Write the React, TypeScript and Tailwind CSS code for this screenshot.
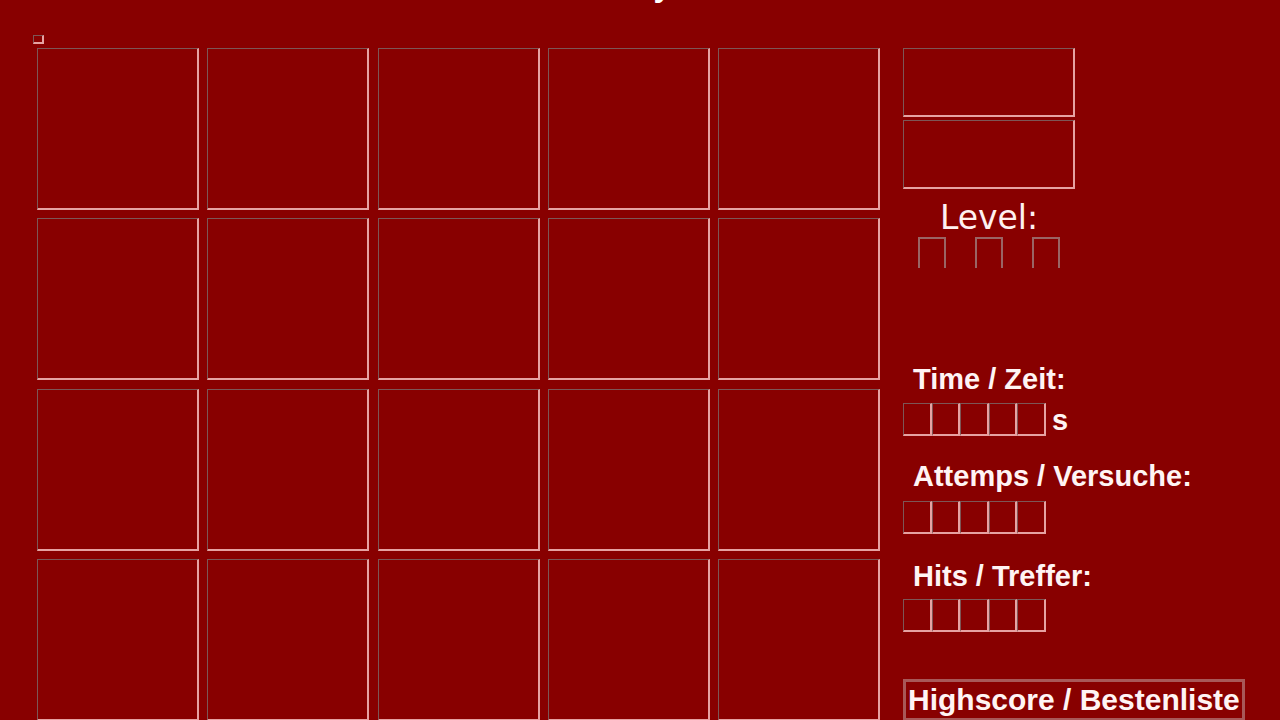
import React from "react";

const cell =
  "border-t border-l border-b-2 border-r-2 border-t-[#7d5656] border-l-[#7d5656] border-b-[#e6a2a2] border-r-[#e6a2a2]";

const label =
  "pl-[10px] text-[29px] leading-[32px] font-bold text-[#fff4f4] whitespace-nowrap";

function Counter({ unit }: { unit?: string }) {
  return (
    <div className="flex items-center">
      {[0, 1, 2, 3, 4].map((i) => (
        <div key={i} className={`w-[28.6px] h-[33px] ${cell}`} />
      ))}
      {unit && <span className="ml-[6px] text-[29px] leading-[32px] font-bold text-[#fff4f4]">{unit}</span>}
    </div>
  );
}

export default function App() {
  return (
    <div
      className="w-[1280px] h-[720px] overflow-hidden bg-[#880000]"
      style={{ fontFamily: '"Liberation Sans", Arial, sans-serif' }}
    >
      {/* title sits mostly above the visible area */}
      <h1 className="-mt-[33px] h-[36px] pr-[60px] text-center text-[32px] leading-[36px] font-bold text-white">
        Memory
      </h1>

      <div className="flex items-start pl-[33px] pt-[32px]">
        {/* playing field */}
        <div className="flex flex-col">
          <div className={`w-[11px] h-[9px] ${cell}`} />
          <div className="ml-[4px] mt-[4px] grid w-[843px] grid-cols-5 gap-[8.25px]">
            {Array.from({ length: 20 }).map((_, i) => (
              <div key={i} className={`h-[162px] ${cell}`} />
            ))}
          </div>
        </div>

        {/* side panel */}
        <div className="ml-[23px] mt-[13px] flex flex-col">
          <div className="flex w-[172px] flex-col">
            <div className={`h-[69px] ${cell}`} />
            <div className={`mt-[3px] h-[69px] ${cell}`} />
            <div
              className="mt-[11px] text-center text-[33px] leading-[36px] text-[#fff0f0]"
              style={{ fontFamily: '"DejaVu Sans", Verdana, sans-serif' }}
            >
              Level:
            </div>
            <div className="mt-[1px] flex justify-around">
              {[0, 1, 2].map((i) => (
                <div key={i} className="h-[31px] w-[28px] border-t-2 border-l-2 border-r-2 border-[#9a6464]" />
              ))}
            </div>
          </div>

          <div className={`mt-[95px] ${label}`}>Time / Zeit:</div>
          <div className="mt-[8px]">
            <Counter unit="s" />
          </div>

          <div className={`mt-[24px] ${label}`}>Attemps / Versuche:</div>
          <div className="mt-[9px]">
            <Counter />
          </div>

          <div className={`mt-[26px] ${label}`}>Hits / Treffer:</div>
          <div className="mt-[7px]">
            <Counter />
          </div>

          <button className="mt-[47px] self-start border-[3px] border-[#a85858] bg-[#880000] px-[2px] text-[30px] leading-[36px] font-bold text-[#fff4f4] whitespace-nowrap">
            Highscore / Bestenliste
          </button>
        </div>
      </div>
    </div>
  );
}
